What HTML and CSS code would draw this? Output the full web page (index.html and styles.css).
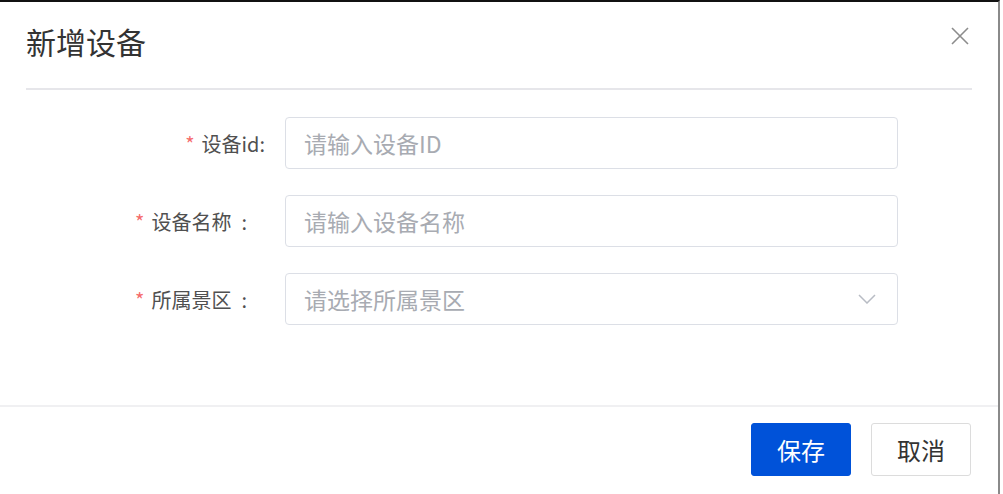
FILE: index.html
```html
<!DOCTYPE html>
<html lang="zh-CN">
<head>
  <meta charset="UTF-8" />
  <title>新增设备</title>
  <link rel="stylesheet" href="styles.css">
</head>
<body>

<div class="dialog">
  <div class="dialog-header">
    <span class="dialog-title">新增设备</span>
    <span class="dialog-close">
      <svg width="18" height="18" viewBox="0 0 18 18"><path d="M1 1L17 17M17 1L1 17" stroke="#8c8c8c" stroke-width="1.6" fill="none"/></svg>
    </span>
  </div>

  <div class="dialog-body">
    <div class="form-row">
      <label class="form-label"><span class="req">*</span>设备id:</label>
      <div class="form-input">请输入设备ID</div>
    </div>
    <div class="form-row">
      <label class="form-label wide"><span class="req">*</span>设备名称<span class="colon">:</span></label>
      <div class="form-input">请输入设备名称</div>
    </div>
    <div class="form-row">
      <label class="form-label wide"><span class="req">*</span>所属景区<span class="colon">:</span></label>
      <div class="form-input select">
        请选择所属景区
        <svg class="arrow" width="18" height="10" viewBox="0 0 18 10"><path d="M1 1L9 9L17 1" stroke="#b8bcc4" stroke-width="1.5" fill="none"/></svg>
      </div>
    </div>
  </div>

  <div class="dialog-footer">
    <button class="btn primary">保存</button>
    <button class="btn">取消</button>
  </div>
</div>

</body>
</html>
```

FILE: styles.css
```css
body {
  margin: 0;
  padding: 0;
  background: #fff;
  font-family: "Noto Sans CJK SC", "Noto Sans", sans-serif;
  color: #333;
}
.dialog {
  width: 1000px;
  height: 494px;
  box-sizing: border-box;
  border-top: 2px solid #111;
  border-right: 2px solid #8a8a8a;
  background: #fff;
  display: flex;
  flex-direction: column;
}
.dialog-header {
  margin: 0 26px 0 26px;
  height: 88px;
  border-bottom: 2px solid #e6e6ea;
  display: flex;
  align-items: center;
  justify-content: space-between;
  box-sizing: border-box;
}
.dialog-title {
  font-size: 30px;
  color: #333;
  line-height: 1;
  margin-top: -8px;
}
.dialog-close {
  display: flex;
  margin-right: 3px;
  margin-top: -18px;
}
.dialog-body {
  padding: 27px 0 0 0;
  height: 317px;
  box-sizing: border-box;
  border-bottom: 2px solid #f0f0f2;
}
.form-row {
  display: flex;
  align-items: center;
  margin-bottom: 26px;
}
.form-label {
  width: 285px;
  text-align: right;
  font-size: 20px;
  color: #505050;
  padding-right: 20px;
  box-sizing: border-box;
}
.form-label.wide {
  padding-right: 38px;
}
.colon {
  margin-left: 10px;
}
.req {
  color: #f56c6c;
  margin-right: 7px;
}
.form-input {
  width: 613px;
  height: 52px;
  box-sizing: border-box;
  border: 1px solid #dcdfe6;
  border-radius: 4px;
  padding: 0 18px;
  display: flex;
  align-items: center;
  font-size: 23px;
  color: #a8abb2;
}
.form-input.select {
  justify-content: space-between;
}
.form-input .arrow {
  margin-right: 3px;
}
.dialog-footer {
  display: flex;
  justify-content: flex-end;
  gap: 20px;
  padding: 16px 27px 0 0;
}
.btn {
  width: 100px;
  height: 53px;
  border: 1px solid #dcdcdc;
  border-radius: 3px;
  background: #fff;
  color: #333;
  font-size: 24px;
  font-family: "Noto Sans CJK SC", sans-serif;
  cursor: pointer;
  padding: 0;
}
.btn.primary {
  background: #0052d9;
  border-color: #0052d9;
  color: #fff;
}
```
